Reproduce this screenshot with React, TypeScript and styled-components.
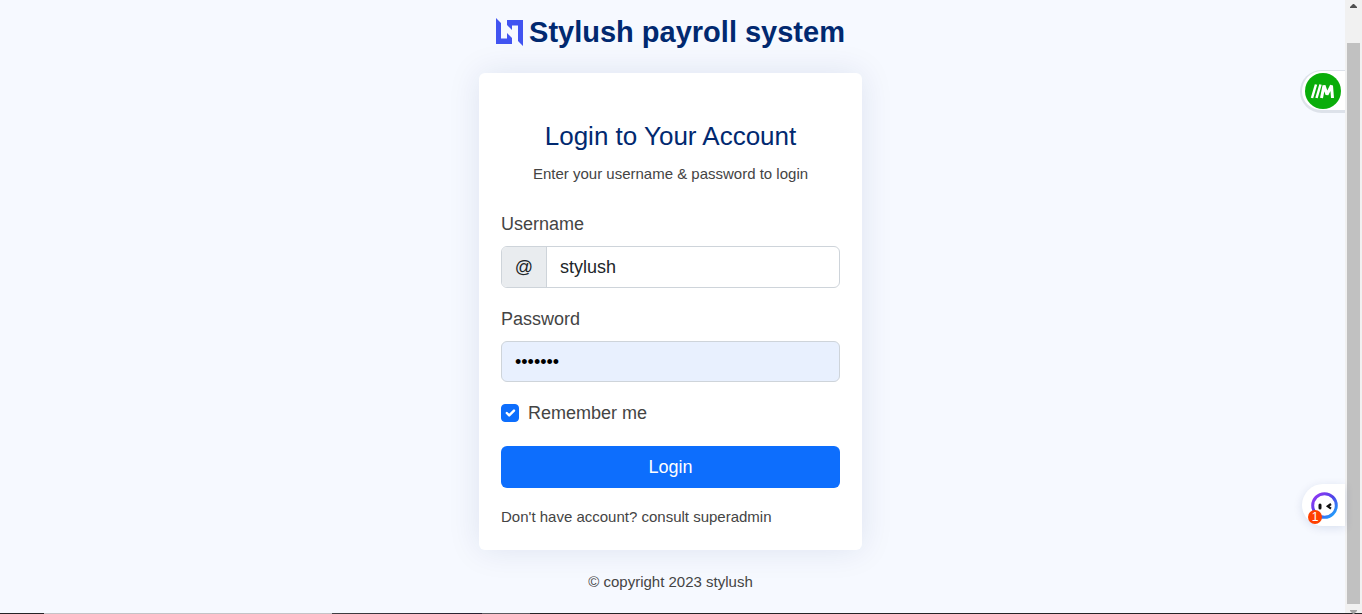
import React, { useState } from 'react';
import styled, { createGlobalStyle } from 'styled-components';

const GlobalStyle = createGlobalStyle`
  *, *::before, *::after { box-sizing: border-box; }
  body {
    margin: 0;
    background: #f6f9ff;
    color: #444444;
    font-family: "Liberation Sans", Arial, sans-serif;
    font-size: 18px;
    line-height: 26px;
  }
`;

const Shell = styled.div`
  display: flex;
  flex-direction: column;
  min-height: 100vh;
`;

const Viewport = styled.div`
  position: relative;
  display: flex;
  flex: 1;
`;

const Page = styled.main`
  flex: 1;
  display: flex;
  flex-direction: column;
  align-items: center;
  padding: 14px 20px 16px 16px;
`;

const Brand = styled.a`
  display: flex;
  align-items: center;
  gap: 5px;
  margin-bottom: 23px;
  color: #012970;
  font-size: 29px;
  font-weight: 700;
  line-height: 36px;
  text-decoration: none;
`;

const Card = styled.section`
  width: 100%;
  max-width: 383px;
  padding: 44px 22px 22px;
  background: #ffffff;
  border-radius: 6px;
  box-shadow: 0 0 33px rgba(1, 41, 112, 0.1);
`;

const CardTitle = styled.h1`
  margin: 0 0 8px;
  color: #012970;
  font-size: 26px;
  font-weight: 400;
  line-height: 38px;
  text-align: center;
`;

const SmallText = styled.p<{ $center?: boolean }>`
  margin: 0;
  font-size: 15px;
  line-height: 22px;
  text-align: ${(p) => (p.$center ? 'center' : 'left')};
`;

const Form = styled.form`
  display: flex;
  flex-direction: column;
  margin-top: 26px;
`;

const Field = styled.div`
  margin-bottom: 18px;
`;

const Label = styled.label`
  display: block;
  margin-bottom: 9px;
`;

const InputGroup = styled.div<{ $filled?: boolean }>`
  display: flex;
  height: ${(p) => (p.$filled ? '41px' : '42px')};
  overflow: hidden;
  background: ${(p) => (p.$filled ? '#e8f0fe' : '#ffffff')};
  border: 1px solid #ced4da;
  border-radius: 6px;
`;

const Prefix = styled.span`
  display: flex;
  align-items: center;
  justify-content: center;
  width: 45px;
  background: #e9ecef;
  border-right: 1px solid #ced4da;
  color: #212529;
`;

const TextInput = styled.input`
  flex: 1;
  min-width: 0;
  padding: 0 13px;
  background: transparent;
  border: 0;
  outline: 0;
  color: #212529;
  font: inherit;

  &[type='password'] {
    color: #000000;
  }
`;

const CheckRow = styled.label`
  display: flex;
  align-items: center;
  gap: 9px;
  margin-bottom: 20px;
`;

const CheckBox = styled.input`
  appearance: none;
  width: 18px;
  height: 18px;
  margin: 0;
  border: 1px solid #bfbfbf;
  border-radius: 4px;

  &:checked {
    border-color: #0d6efd;
    background: #0d6efd
      url("data:image/svg+xml,%3csvg xmlns='http://www.w3.org/2000/svg' viewBox='0 0 20 20'%3e%3cpath fill='none' stroke='%23fff' stroke-linecap='round' stroke-linejoin='round' stroke-width='3' d='m6 10 3 3 6-6'/%3e%3c/svg%3e")
      center / contain no-repeat;
  }
`;

const LoginButton = styled.button`
  height: 42px;
  margin-bottom: 18px;
  background: #0d6efd;
  border: 0;
  border-radius: 6px;
  color: #ffffff;
  font: inherit;
  cursor: pointer;
`;

const Credits = styled.footer`
  margin-top: 21px;
  font-size: 15px;
  line-height: 22px;
`;

const SideTab = styled.button<{ $top: number; $ring?: boolean }>`
  position: absolute;
  top: ${(p) => p.$top}px;
  right: 17px;
  display: flex;
  align-items: center;
  width: ${(p) => (p.$ring ? '45px' : '43px')};
  height: ${(p) => (p.$ring ? '43px' : '42px')};
  padding: 0 0 0 ${(p) => (p.$ring ? '3px' : '8px')};
  background: #ffffff;
  border: ${(p) => (p.$ring ? '2px solid #dde2ea' : '0')};
  border-top-width: ${(p) => (p.$ring ? '1px' : '0')};
  border-right: 0;
  border-bottom-width: ${(p) => (p.$ring ? '3px' : '0')};
  border-radius: 22px 0 0 22px;
  box-shadow: ${(p) => (p.$ring ? 'none' : '0 2px 10px rgba(1, 41, 112, 0.12)')};
  cursor: pointer;
`;

const Count = styled.span`
  position: absolute;
  left: 6px;
  bottom: 2px;
  width: 14px;
  height: 14px;
  border-radius: 50%;
  background: #ff4000;
  color: #ffffff;
  font-size: 12px;
  line-height: 14px;
  text-align: center;
`;

const ScrollTrack = styled.div`
  display: flex;
  flex-direction: column;
  align-items: center;
  width: 17px;
  background: #f1f1f1;
`;

const ScrollThumb = styled.div`
  flex: 1;
  width: 13px;
  margin-top: 35px;
  background: #c1c1c1;
`;

const Arrow = styled.svg`
  display: block;
  width: 7px;
  height: 4px;
  margin: 4px 0 0;
`;

const ArrowDown = styled(Arrow)`
  margin: 6px 0 -1px;
`;

const BottomEdge = styled.div`
  height: 1px;
  background: linear-gradient(
    to right,
    #252326 0 44px,
    #c4c3c7 44px 332px,
    #403e42 332px,
    #252030 482px,
    #5c5a60 482px 530px,
    #252326 530px
  );
`;

function BrandLogo() {
  return (
    <svg width="28" height="28" viewBox="0 0 28 28" aria-hidden="true">
      <g fill="#4154f1">
        <path d="M0 0 5 5V20.500H11V15L16 20V26H0Z" />
        <path d="M11 2H27V28L22 23V7.500H16V12L11 7Z" />
      </g>
    </svg>
  );
}

function MarkIcon() {
  return (
    <svg width="36" height="36" viewBox="0 0 36 36" aria-hidden="true">
      <circle cx="18" cy="18" r="18" fill="#0aad0a" />
      <g fill="none" stroke="#fff">
        <path d="M7 25 11 11.500 M11.500 25 15.500 11.500" strokeWidth="2.500" />
        <path d="M16.500 25 19 12.500 22 21.500 26.500 12.500 27.500 25" strokeWidth="3" strokeLinejoin="bevel" />
      </g>
    </svg>
  );
}

function AssistantIcon() {
  return (
    <svg width="30" height="30" viewBox="0 0 30 30" aria-hidden="true">
      <defs>
        <linearGradient id="assistantRing" x1="0" y1="0" x2="1" y2="1">
          <stop offset="0" stopColor="#9a35f5" />
          <stop offset="0.500" stopColor="#5044e8" />
          <stop offset="1" stopColor="#17b2ff" />
        </linearGradient>
      </defs>
      <circle cx="14.500" cy="15.500" r="11.800" fill="#fff" stroke="url(#assistantRing)" strokeWidth="3" />
      <rect x="8.500" y="13.500" width="3" height="6" rx="1.500" fill="#111" />
      <path d="M21 14 17.800 16.300 21 18.600" fill="none" stroke="#111" strokeWidth="2.200" />
    </svg>
  );
}

export default function App() {
  const [username, setUsername] = useState('stylush');
  const [password, setPassword] = useState('stylush');
  const [remember, setRemember] = useState(true);

  return (
    <Shell>
      <GlobalStyle />
      <Viewport>
        <Page>
          <Brand href="#">
            <BrandLogo />
            <span>Stylush payroll system</span>
          </Brand>
          <Card>
            <CardTitle>Login to Your Account</CardTitle>
            <SmallText $center>Enter your username &amp; password to login</SmallText>
            <Form onSubmit={(e) => e.preventDefault()}>
              <Field>
                <Label htmlFor="username">Username</Label>
                <InputGroup>
                  <Prefix>@</Prefix>
                  <TextInput id="username" type="text" value={username} onChange={(e) => setUsername(e.target.value)} />
                </InputGroup>
              </Field>
              <Field>
                <Label htmlFor="password">Password</Label>
                <InputGroup $filled>
                  <TextInput id="password" type="password" value={password} onChange={(e) => setPassword(e.target.value)} />
                </InputGroup>
              </Field>
              <CheckRow>
                <CheckBox type="checkbox" checked={remember} onChange={(e) => setRemember(e.target.checked)} />
                Remember me
              </CheckRow>
              <LoginButton type="submit">Login</LoginButton>
              <SmallText>Don't have account? consult superadmin</SmallText>
            </Form>
          </Card>
          <Credits>© copyright 2023 stylush</Credits>
        </Page>
        <SideTab type="button" aria-label="Extension" $top={70} $ring>
          <MarkIcon />
        </SideTab>
        <SideTab type="button" aria-label="Assistant" $top={484}>
          <AssistantIcon />
          <Count>1</Count>
        </SideTab>
        <ScrollTrack aria-hidden="true">
          <Arrow viewBox="0 0 7 4">
            <path d="M3 0H4L7 3V4H0V3Z" fill="#505050" />
          </Arrow>
          <ScrollThumb />
          <ArrowDown viewBox="0 0 7 4">
            <path d="M0 0H7V1L4 4H3L0 1Z" fill="#a3a3a3" />
          </ArrowDown>
        </ScrollTrack>
      </Viewport>
      <BottomEdge />
    </Shell>
  );
}
